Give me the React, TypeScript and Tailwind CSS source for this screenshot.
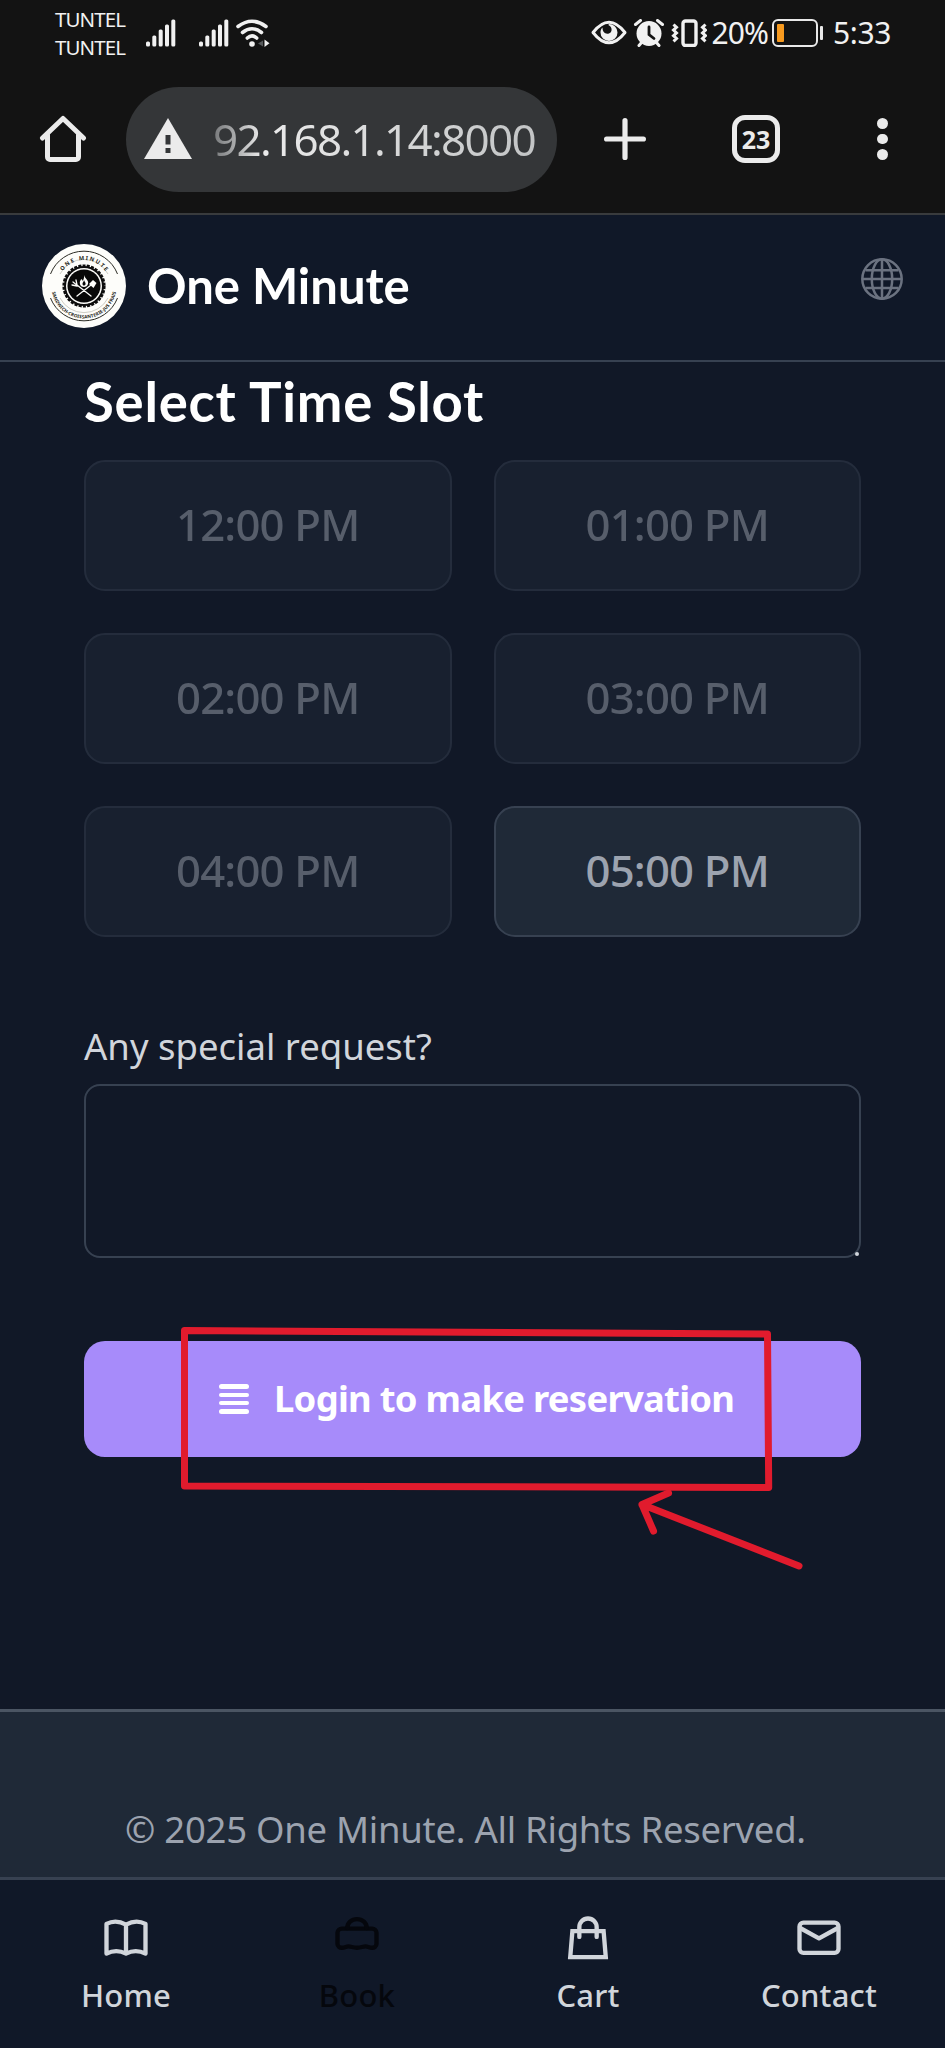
import type { ReactNode } from "react";

function SignalBars() {
  return (
    <svg className="block h-[28px] w-[30px] shrink-0" viewBox="0 0 30 28" fill="#f1f1f1">
      <rect x="0" y="22.5" width="4" height="5" rx="1.5" />
      <rect x="6.3" y="16.5" width="4" height="11" rx="1.5" />
      <rect x="12.7" y="10.5" width="4" height="17" rx="1.5" />
      <rect x="19" y="5.5" width="4" height="22" rx="1.5" />
      <rect x="25.3" y="0.5" width="4" height="27" rx="1.5" />
    </svg>
  );
}

function StatusBar() {
  return (
    <div className="flex h-[66px] items-start text-[#f1f1f1]">
      <div className="ml-[55px] w-[72px] pt-[5px] text-[20.5px] leading-[28px] tracking-[-0.9px]">
        <div>TUNTEL</div>
        <div>TUNTEL</div>
      </div>
      <div className="ml-[18.5px] mt-[18.5px] flex">
        <SignalBars />
        <div className="w-[23.5px]" />
        <SignalBars />
        <svg className="ml-[7px] block h-[28px] w-[34px]" viewBox="0 0 34 28" fill="none" stroke="#f1f1f1" strokeWidth="3.6" strokeLinecap="round">
          <path d="M2 7.5Q16 -3 30 7.5" />
          <path d="M6.5 13.5Q16 6 25.5 13.5" />
          <path d="M11.3 19Q16 14.8 20.7 19" />
          <circle cx="16" cy="25" r="2.8" fill="#f1f1f1" stroke="none" />
          <path d="M27 21.5v6l-5-3z" fill="#55585a" stroke="none" />
          <path d="M28.5 20.5v7.5l5-3.7z" fill="#f1f1f1" stroke="none" />
        </svg>
      </div>
      <div className="ml-auto mr-[54px] flex h-[66px] items-center">
        <svg className="block h-[28px] w-[116px]" viewBox="0 0 116 28" fill="none" stroke="#f1f1f1">
          <path d="M2 13.5Q18 -7 34 13.5Q18 34 2 13.5Z" strokeWidth="3" strokeLinejoin="round" />
          <path d="M18 5a8.5 8.5 0 1 1-8.5 8.5c0-2 .7-3.600 2-5c0 4 2 6.200 4.800 6.200c3 0 4.700-2.200 4.200-5c-.3-1.800-1.400-3-3.200-3.800z" fill="#f1f1f1" stroke="none" />
          <circle cx="58" cy="14.500" r="12.500" fill="#f1f1f1" stroke="none" />
          <path d="M44.500 5.500l5-4M71.500 5.500l-5-4M48 26.500l3-3.500M68 26.500l-3-3.500" strokeWidth="3" strokeLinecap="round" />
          <path d="M58 8v7.500l5 4" stroke="#131313" strokeWidth="2.800" strokeLinecap="round" />
          <rect x="92" y="2" width="13" height="24.500" rx="2.500" strokeWidth="3.400" />
          <path d="M82.500 5.500l3 2.800-3 2.800 3 2.800-3 2.800 3 2.800-3 2.800M114.500 5.500l-3 2.800 3 2.800-3 2.800 3 2.800-3 2.800 3 2.800" strokeWidth="3" />
        </svg>
        <div className="ml-[5px] w-[60px] text-[30px] leading-[40px] tracking-[-0.9px]">20%</div>
        <div className="flex items-center">
          <div className="h-[28px] w-[46px] rounded-[6px] border-[2.500px] border-[#e9e9e9] px-[3px] py-[3px]">
            <div className="h-full w-[7px] rounded-[1px] bg-[#f79a1f]" />
          </div>
          <div className="ml-[2px] h-[14px] w-[3.500px] rounded-[1px] bg-[#e9e9e9]" />
        </div>
        <div className="ml-[10px] text-[30px] leading-[40px] tracking-[-0.4px]">5:33</div>
      </div>
    </div>
  );
}

function BrowserBar() {
  return (
    <div className="flex h-[147px] items-center pb-[1px] text-[#ebebeb]">
      <svg className="ml-[39px] block h-[48px] w-[48px] shrink-0" viewBox="0 0 48 48" fill="none" stroke="#ebebeb" strokeWidth="5" strokeLinecap="round" strokeLinejoin="round">
        <path d="M3.500 23L24 3.500L44.500 23" />
        <path d="M8.500 20V42a2.500 2.500 0 0 0 2.500 2.500H37a2.500 2.500 0 0 0 2.500-2.500V20" />
      </svg>
      <div className="ml-[39px] flex h-[105px] w-[431px] items-center overflow-hidden rounded-full bg-[#343638]">
        <svg className="ml-[18px] block h-[42px] w-[48px] shrink-0" viewBox="0 0 48 42">
          <path d="M24 0L48 41H0Z" fill="#ebebeb" />
          <path d="M21.500 17h5v9.500h-5zM21.500 30h5v5h-5z" fill="#343638" />
        </svg>
        <span className="ml-[21px] bg-linear-to-r from-[#77797b] via-[#ebebeb] via-15% to-[#c2c4c5] bg-clip-text pr-[2px] text-[44px] leading-[56px] tracking-[-1.700px] whitespace-nowrap text-transparent">92.168.1.14:8000</span>
      </div>
      <svg className="ml-[46px] block h-[44px] w-[44px] shrink-0" viewBox="0 0 44 44" stroke="#ebebeb" strokeWidth="5.200" strokeLinecap="round">
        <path d="M22 3.600V40.400M3.600 22H40.400" />
      </svg>
      <div className="ml-[85px] flex h-[48px] w-[48px] shrink-0 items-center justify-center rounded-[13px] border-[5px] border-[#ebebeb] text-[25px] leading-none font-bold">23</div>
      <div className="ml-[97px] flex flex-col gap-[5px]">
        <div className="size-[10.700px] rounded-full bg-[#ebebeb]" />
        <div className="size-[10.700px] rounded-full bg-[#ebebeb]" />
        <div className="size-[10.700px] rounded-full bg-[#ebebeb]" />
      </div>
    </div>
  );
}

function Logo() {
  return (
    <svg className="block h-[84px] w-[84px]" viewBox="0 0 84 84" fill="none">
      <defs>
        <path id="arcTop" d="M16 42a26 26 0 0 1 52 0" />
        <path id="arcBottom" d="M9.500 42a32.500 32.500 0 0 0 65 0" />
      </defs>
      <circle cx="42" cy="42" r="42" fill="#fdfdfa" />
      <path d="M8.500 30A36 36 0 0 1 75.500 30M8.500 54A36 36 0 0 0 75.500 54" stroke="#2b2b24" strokeWidth="1" />
      <path d="M18 30A27 27 0 0 1 66 30M18 54A27 27 0 0 0 66 54" stroke="#b9b9ae" strokeWidth=".7" />
      <circle cx="42" cy="42" r="20" stroke="#0d0d0d" strokeWidth="3.200" strokeDasharray="3 1.190" />
      <circle cx="42" cy="42" r="19" stroke="#0d0d0d" strokeWidth="2" />
      <circle cx="42" cy="42" r="16.500" fill="#080808" />
      <path d="M42 31c1 4 5 5 4 9c-.6 2-2 3-4 3s-4-1-4.200-4c-.1-2 1-2.500 1.300-4c1 .6 1.200 1 1.600 2c1.300-2 1.600-4 1.300-6z" fill="#fdfdfa" />
      <path d="M42 36c.5 2 2 2.500 1.500 4.500c-.6 1.400-2.600 1.200-3-.3c-.2-1.800 1.300-2.200 1.500-4.200z" fill="#080808" />
      <path d="M35 52L49 41M49 52L35 41M31 38l5 4M30 41l5 1M34 36l1 5" stroke="#fdfdfa" strokeWidth="1.300" strokeLinecap="round" />
      <path d="M47 40l4-4 3.500 3-3 5z" fill="#fdfdfa" />
      <text fill="#1d1d18" fontSize="5.600" fontWeight="700" letterSpacing="1.500" textAnchor="middle">
        <textPath href="#arcTop" startOffset="51%">ONE MINUTE</textPath>
      </text>
      <text fill="#1d1d18" fontSize="4.600" fontWeight="700" textAnchor="middle">
        <textPath href="#arcBottom" startOffset="50%" textLength="90">SANDWICH-CROISSANTERIE-JUS FRAIS</textPath>
      </text>
    </svg>
  );
}

function SiteHeader() {
  return (
    <header className="flex h-[149px] items-center border-t-2 border-b-2 border-t-[#393b3d] border-b-[#374151] bg-gray-900 px-[42px] pb-[3px]">
      <Logo />
      <h1 className="ml-[21px] pb-[3px] font-['Lato',sans-serif] text-[49px] leading-[60px] font-bold text-white">One Minute</h1>
      <svg className="mb-[14px] ml-auto block h-[42px] w-[42px]" viewBox="0 0 42 42" fill="none" stroke="#6b7280" strokeWidth="2.500">
        <circle cx="21" cy="21" r="19.700" />
        <ellipse cx="21" cy="21" rx="10.200" ry="19.700" />
        <path d="M21 1.500V40.500M1.500 21H40.500M4.500 12.200H37.500M4.500 30H37.500" />
      </svg>
    </header>
  );
}

const slots = [
  { time: "12:00 PM", open: false },
  { time: "01:00 PM", open: false },
  { time: "02:00 PM", open: false },
  { time: "03:00 PM", open: false },
  { time: "04:00 PM", open: false },
  { time: "05:00 PM", open: true },
];

function Annotation() {
  return (
    <svg className="pointer-events-none absolute top-[-19px] left-[90px] h-[260px] w-[640px]" viewBox="174 1322 640 260" fill="none" stroke="#e11b2d" strokeWidth="7" strokeLinecap="round" strokeLinejoin="round">
      <path d="M184.500 1330.500L767.500 1334L768.700 1487.500L184.500 1486Z" />
      <path d="M799 1566L642 1504.500M668.500 1493L642 1504.500L653.500 1531" />
    </svg>
  );
}

function ReservationForm() {
  return (
    <main className="flex-1 px-[84px] pt-[9px]">
      <h2 className="font-['Lato',sans-serif] text-[54.500px] leading-[60px] font-bold tracking-[0.750px] text-white">Select Time Slot</h2>
      <div className="mt-[29px] grid grid-cols-2 gap-[42px]">
        {slots.map((s) => (
          <button
            key={s.time}
            className={
              "flex h-[131px] items-center justify-center rounded-[21px] border-[2.500px] border-[#374151] bg-[#1f2937] pb-[2px] text-[43.700px] font-medium tracking-[-0.800px] text-[#9ca3af] " +
              (s.open ? "opacity-100" : "opacity-50")
            }
          >
            {s.time}
          </button>
        ))}
      </div>
      <label className="mt-[90px] block text-[36.500px] leading-[38px] text-[#d1d5db]">Any special request?</label>
      <div className="relative mt-[19px] h-[174px] rounded-[16px] border-2 border-[#374151]">
        <div className="absolute right-[0px] bottom-[0px] size-[4px] rounded-full bg-[#d1d5db]" />
      </div>
      <div className="relative mt-[83px]">
        <button className="flex h-[116px] w-full items-center rounded-[21px] bg-[#a78bfa] pl-[135px] text-white">
          <div className="flex w-[30px] flex-col gap-[4px]">
            <div className="h-[4.400px] rounded-full bg-white" />
            <div className="h-[4.400px] rounded-full bg-white" />
            <div className="h-[4.400px] rounded-full bg-white" />
            <div className="h-[4.400px] rounded-full bg-white" />
          </div>
          <span className="ml-[25px] pb-[2px] text-[36.400px] leading-[44px] font-bold tracking-[-0.720px] whitespace-nowrap">Login to make reservation</span>
        </button>
        <Annotation />
      </div>
    </main>
  );
}

function NavItem({ label, tone, children }: { label: string; tone: string; children: ReactNode }) {
  return (
    <a className={"flex flex-col items-center " + tone}>
      <svg className="block h-[52px] w-[52px]" viewBox="0 0 24 24" fill="none" stroke="currentColor" strokeWidth="2" strokeLinejoin="round" strokeLinecap="round">
        {children}
      </svg>
      <span className="mt-[12px] text-[31px] leading-[38px] font-medium tracking-[0.200px]">{label}</span>
    </a>
  );
}

function BottomNav() {
  return (
    <nav className="grid h-[171px] grid-cols-4 border-t-[3px] border-[#374151] bg-gray-900 px-[10.500px] pt-[32px]">
      <NavItem label="Home" tone="text-[#d1d5db]">
        <path d="M12 5.800V19.200M12 5.800C9 4.200 5.500 4.200 3 5.500V19.200C6 17.700 9 17.700 12 19.200C15 17.700 18 17.700 21 19.200V5.500C18.500 4.200 15 4.200 12 5.800Z" />
      </NavItem>
      <NavItem label="Book" tone="text-[#05070d]">
        <path d="M3 9.500C3 8.500 4 7.700 5 7.700H19C20 7.700 21 8.500 21 9.500V14.800C21 15.800 20 16.500 19 16.500C17.500 16.500 17 15.900 16 15.900C14.500 15.900 14 16.500 12 16.500C10 16.500 9.500 15.900 8 15.900C7 15.900 6.500 16.500 5 16.500C4 16.500 3 15.800 3 14.800Z" />
        <path d="M7.500 7.400C7.500 4.900 9.500 3.300 12 3.300C14.500 3.300 16.500 4.900 16.500 7.400" />
      </NavItem>
      <NavItem label="Cart" tone="text-[#d1d5db]">
        <path d="M4.800 8.800H19.200L20.200 20.800H3.800Z" strokeLinejoin="miter" />
        <path d="M8 11.500V7A4 4 0 0 1 16 7V11.500" />
      </NavItem>
      <NavItem label="Contact" tone="text-[#d1d5db]">
        <rect x="3" y="4.900" width="18" height="14" rx="1.800" />
        <path d="M3.500 7.500L12 12.200L20.500 7.500" />
      </NavItem>
    </nav>
  );
}

export default function App() {
  return (
    <div className="flex h-[2048px] w-[945px] flex-col overflow-hidden bg-[#111827] font-['Noto_Sans',sans-serif]">
      <div className="bg-[#131313]">
        <StatusBar />
        <BrowserBar />
      </div>
      <SiteHeader />
      <ReservationForm />
      <footer className="h-[168px] border-t-[3px] border-[#4b5563] bg-[#1f2937] pt-[95px] pl-[125px]">
        <p className="text-[36.500px] leading-[44px] tracking-[-0.270px] whitespace-nowrap text-[#9ca3af]">© 2025 One Minute. All Rights Reserved.</p>
      </footer>
      <BottomNav />
    </div>
  );
}
